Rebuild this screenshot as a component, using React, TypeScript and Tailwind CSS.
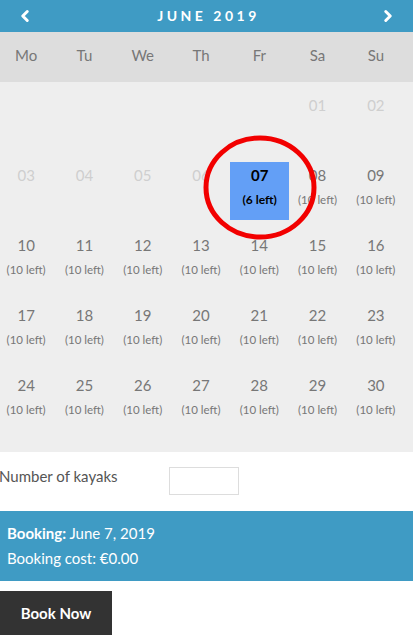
import { ChevronLeft, ChevronRight } from "lucide-react"

const weekdays = ["Mo", "Tu", "We", "Th", "Fr", "Sa", "Su"]

type Day = { n: string; left?: number; off?: boolean; picked?: boolean } | null

const weeks: Day[][] = [
  [null, null, null, null, null, { n: "01", off: true }, { n: "02", off: true }],
  [
    { n: "03", off: true },
    { n: "04", off: true },
    { n: "05", off: true },
    { n: "06", off: true },
    { n: "07", left: 6, picked: true },
    { n: "08", left: 10 },
    { n: "09", left: 10 },
  ],
  ["10", "11", "12", "13", "14", "15", "16"].map((n) => ({ n, left: 10 })),
  ["17", "18", "19", "20", "21", "22", "23"].map((n) => ({ n, left: 10 })),
  ["24", "25", "26", "27", "28", "29", "30"].map((n) => ({ n, left: 10 })),
]

function Cell({ day }: { day: Day }) {
  if (!day) return <div className="h-[70px]" />
  if (day.picked) {
    return (
      <div className="h-[70px]">
        <div className="flex h-[58px] w-[59px] flex-col items-center bg-[#639ff6] pt-[3px] text-black">
          <span className="text-[15px] font-bold leading-[20px]">{day.n}</span>
          <span className="mt-[5px] text-[12px] font-bold leading-[20px]">({day.left} left)</span>
        </div>
      </div>
    )
  }
  return (
    <div className="flex h-[70px] flex-col items-center pt-[3px]">
      <span className={`text-[15px] leading-[20px] ${day.off ? "text-[#cfcfcf]" : "text-[#777]"}`}>{day.n}</span>
      {day.left && (
        <span className="mt-[5px] text-[11.5px] leading-[20px] text-[#777]">({day.left} left)</span>
      )}
    </div>
  )
}

export default function App() {
  return (
    <div className="h-[635px] w-[415px] overflow-hidden bg-white" style={{ fontFamily: "Lato, 'Open Sans', sans-serif" }}>
      <div className="w-[413px]">
        <div className="flex h-[32px] items-center justify-between bg-[#3f9bc4] px-[16px] pb-[1px] text-white">
          <ChevronLeft className="size-[18px]" strokeWidth={4} />
          <span className="pl-[4px] text-[14px] font-bold tracking-[3.5px]">JUNE 2019</span>
          <ChevronRight className="size-[18px]" strokeWidth={4} />
        </div>
        <div className="h-[50px] bg-[#dddddd] pb-[3px]">
          <div className="ml-[-3px] grid h-full w-[408px] grid-cols-7 items-center">
            {weekdays.map((d) => (
              <span key={d} className="text-center text-[15px] text-[#777]">
                {d}
              </span>
            ))}
          </div>
        </div>
        <div className="relative bg-[#eeeeee] pb-[10px] pt-[10px]">
          <div className="ml-[-3px] grid w-[408px] grid-cols-7">
            {weeks.flat().map((day, i) => (
              <Cell key={i} day={day} />
            ))}
          </div>
          <svg className="absolute left-[203px] top-[53px]" width="114" height="105" viewBox="0 0 114 105">
            <ellipse cx="57" cy="52.5" rx="54" ry="49.5" fill="none" stroke="#f20000" strokeWidth="5" />
          </svg>
        </div>
      </div>

      <div className="flex h-[59px] items-start pt-[14px]">
        <span className="ml-[-1px] w-[170px] text-[15px] leading-[20px] text-[#555]">Number of kayaks</span>
        <input className="mt-[1px] h-[28px] w-[70px] border border-[#dddddd] bg-white" />
      </div>

      <div className="flex h-[70px] w-[413px] flex-col justify-center bg-[#3f9bc4] px-[7px] text-[15px] leading-[25px] text-white">
        <div>
          <span className="font-bold">Booking:</span> June 7, 2019
        </div>
        <div>Booking cost: €0.00</div>
      </div>

      <button className="mt-[10px] flex h-[46px] w-[112px] items-center justify-center bg-[#333] pb-[2px] text-[15px] font-bold text-white">
        Book Now
      </button>
    </div>
  )
}
